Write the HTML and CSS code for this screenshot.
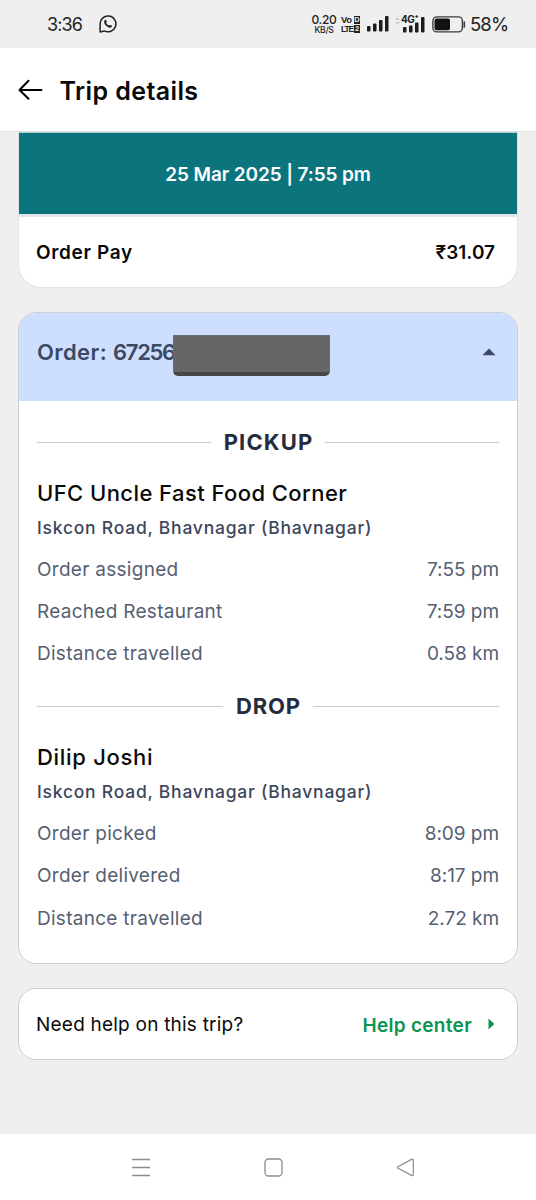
FILE: index.html
```html
<!DOCTYPE html>
<html lang="en">
<head>
<meta charset="utf-8">
<title>Trip details</title>
<link rel="stylesheet" href="styles.css">
</head>
<body>
<div class="screen">
  <div class="status">
    <span class="clock">3:36</span>
    <svg class="whatsapp" width="18" height="18" viewBox="0 0 18 18" fill="none" stroke="#222" stroke-width="1.5">
      <path d="M1.100 16.900V9A7.900 7.900 0 1 1 5.300 15.900Z" stroke-linejoin="round"/>
      <path d="M5.900 5.100c.6-.6 1.200-.3 1.400.3l.5 1.200c.1.4-.6 1-.6 1.200.4 1.200 1.500 2.300 2.900 2.800.3 0 .8-.8 1.200-.700l1.300.7c.5.3.3.8 0 1.300-.9 1-2.200.9-3.700.2C6.900 11 5.300 9 5.100 7.300c0-.9.2-1.600.8-2.200Z" fill="#222" stroke="none"/>
    </svg>
    <span class="speed"><b>0.20</b><i>KB/S</i></span>
    <span class="volte">
      <span class="volte-line"><span>Vo</span><em>D</em></span>
      <span class="volte-line"><span class="lte">LTE</span><em>2</em></span>
    </span>
    <svg class="signal" width="22" height="16" viewBox="0 0 22 16" fill="#1c1c1c">
      <rect x="0" y="10" width="3.500" height="5.500" rx="1"/><rect x="6" y="7.500" width="3.500" height="8" rx="1"/><rect x="12" y="4" width="3.500" height="11.500" rx="1"/><rect x="18" y="0" width="3.500" height="15.500" rx="1"/>
    </svg>
    <span class="mobile">
      <svg width="30" height="17" viewBox="0 0 30 17" fill="#1c1c1c">
        <path d="m0 4 2.500-2.800L5 4ZM0 6h5L2.500 8.600Z" fill="#c9c9c9"/>
        <rect x="8" y="11" width="3.500" height="5.500" rx="1"/><rect x="14" y="9.500" width="3.500" height="7" rx="1"/><rect x="20" y="6.500" width="3.500" height="10" rx="1"/><rect x="26" y="1" width="3.500" height="15.500" rx="1"/>
      </svg>
      <span class="net">4G⁺</span>
    </span>
    <svg class="battery" width="34" height="17" viewBox="0 0 34 17" fill="none">
      <rect x=".9" y=".9" width="29.500" height="15" rx="4" stroke="#3a3a3a" stroke-width="1.400"/>
      <rect x="2.500" y="2.500" width="15.500" height="11.800" rx="2" fill="#111"/>
      <path d="M32.300 6v5" stroke="#3a3a3a" stroke-width="1.600" stroke-linecap="round"/>
    </svg>
    <span class="percent">58%</span>
  </div>

  <header class="header">
    <svg width="25" height="22" viewBox="0 0 25 22" fill="none" stroke="#000" stroke-width="2" stroke-linecap="round" stroke-linejoin="round"><path d="M10.500 1.700 1.500 11l9 8.700M1.500 11H23.500"/></svg>
    <h1 class="title">Trip details</h1>
  </header>

  <main class="content">
    <section class="summary">
      <div class="date"><span>25 Mar 2025 | 7:55 pm</span></div>
      <div class="pay"><span class="pay-label">Order Pay</span><span class="amount">₹31.07</span></div>
    </section>

    <section class="card order">
      <div class="order-head">
        <span class="order-id">Order: <span class="digits">67256</span></span><span class="redacted"></span>
        <svg class="caret" width="14" height="8" viewBox="0 0 14 8"><path d="M7 .5 13.500 7.200H.5Z" fill="#3d4a63"/></svg>
      </div>
      <div class="order-body">
        <div class="stop">
          <div class="divider"><span class="pickup">PICKUP</span></div>
          <h2 class="name">UFC Uncle Fast Food Corner</h2>
          <p class="address">Iskcon Road, Bhavnagar (Bhavnagar)</p>
          <div class="row"><span>Order assigned</span><span class="value">7:55 pm</span></div>
          <div class="row"><span>Reached Restaurant</span><span class="value">7:59 pm</span></div>
          <div class="row"><span>Distance travelled</span><span class="value">0.58 km</span></div>
        </div>
        <div class="stop">
          <div class="divider"><span class="drop">DROP</span></div>
          <h2 class="name person">Dilip Joshi</h2>
          <p class="address">Iskcon Road, Bhavnagar (Bhavnagar)</p>
          <div class="row"><span>Order picked</span><span class="value">8:09 pm</span></div>
          <div class="row"><span>Order delivered</span><span class="value">8:17 pm</span></div>
          <div class="row"><span>Distance travelled</span><span class="value">2.72 km</span></div>
        </div>
      </div>
    </section>

    <section class="card help">
      <span class="question">Need help on this trip?</span>
      <span class="help-link">Help center</span>
      <svg width="7" height="12" viewBox="0 0 7 12"><path d="M.5.5 6.300 6 .5 11.500Z" fill="#0b9550"/></svg>
    </section>
  </main>

  <nav class="nav">
    <svg width="18" height="19" viewBox="0 0 18 19" stroke="#8c8c8c" stroke-width="1.300"><path d="M0 1.500h18M0 9.500h18M0 17.500h18"/></svg>
    <svg width="19" height="19" viewBox="0 0 19 19" fill="none" stroke="#8c8c8c" stroke-width="1.300"><rect x="1" y="1" width="17" height="17" rx="3.500"/></svg>
    <svg width="19" height="19" viewBox="0 0 19 19" fill="none" stroke="#8c8c8c" stroke-width="1.200" stroke-linejoin="round"><path d="M2 8.700 15.500 1.400q1.800-.8 1.800 1v14q0 1.800-1.800 1L2 10.200q-1.300-.7 0-1.500Z"/></svg>
  </nav>
</div>
</body>
</html>
```
FILE: styles.css
```css
* { box-sizing: border-box; }
body { margin: 0; background: #efefef; font-family: Inter, "Noto Sans", sans-serif; color: #0a0a0a; }
h1, h2, p { margin: 0; }
svg { display: block; flex: none; }
span { white-space: nowrap; }
.screen { width: 536px; height: 1200px; display: flex; flex-direction: column; overflow: hidden; }

.status { height: 48px; flex: none; display: flex; align-items: center; padding: 0 30px 0 47px; background: #efefef; color: #222; }
.clock { font-size: 18px; width: 52px; letter-spacing: -.9px; }
.whatsapp { margin-right: auto; }
.speed { display: flex; flex-direction: column; align-items: center; width: 24px; }
.speed b { font-size: 12px; line-height: 12px; font-weight: 500; letter-spacing: -.3px; }
.speed i { font-size: 8.500px; line-height: 8px; font-style: normal; font-weight: 500; letter-spacing: -.3px; }
.volte { display: flex; flex-direction: column; gap: 1px; width: 19px; margin-left: 5px; font: 700 9.500px/8px "Liberation Sans Narrow", "Liberation Sans", sans-serif; }
.volte-line { display: flex; justify-content: space-between; align-items: center; }
.volte-line span { letter-spacing: -.3px; }
.volte-line .lte { font-size: 8.500px; letter-spacing: -1.100px; }
.volte em { font-style: normal; font-size: 7.500px; line-height: 8px; width: 6px; text-align: center; background: #222; color: #efefef; }
.signal { margin-left: 7px; }
.mobile { position: relative; margin-left: 6px; }
.net { position: absolute; left: 6px; top: -1px; font-size: 10px; font-weight: 700; line-height: 9px; letter-spacing: -.5px; }
.battery { margin-left: 7px; }
.percent { font-size: 18.500px; width: 36px; margin-left: 4px; letter-spacing: -.9px; }

.header { height: 84px; flex: none; display: flex; align-items: center; gap: 17px; padding: 0 17px 0 17.500px; background: #fff; border-bottom: 1px solid #e4e4e4; }
.title { font-size: 25px; font-weight: 600; line-height: 32px; padding-top: 2px; letter-spacing: .4px; }

.content { flex: 1; padding: 0 18px; display: flex; flex-direction: column; }
.summary { height: 156px; flex: none; background: #fff; border: 1px solid #e2e3e5; border-top: 0; border-radius: 0 0 23px 23px; overflow: hidden; }
.date { height: 85px; padding-top: 2px; display: flex; align-items: center; justify-content: center; background: #0b747d; border-top: 1px solid #a9cdd1; border-bottom: 3px solid #e3e6ea; color: #fff; font-size: 19px; font-weight: 600; letter-spacing: -.12px; }
.pay { height: 70px; display: flex; align-items: center; justify-content: space-between; padding: 0 22px 0 17px; font-size: 19px; font-weight: 600; }
.pay-label { letter-spacing: .65px; }
.amount { letter-spacing: 0; }

.card { flex: none; background: #fff; border: 1px solid #cbced5; border-radius: 18px; overflow: hidden; }
.order { height: 652px; margin-top: 24px; }
.order-head { height: 88px; display: flex; align-items: flex-start; padding: 22px 21px 0 18px; background: #cedeff; }
.order-id { width: 136px; flex: none; font-size: 22px; font-weight: 600; line-height: 34px; letter-spacing: .4px; color: #3d4962; }
.digits { letter-spacing: -1.300px; }
.redacted { width: 157px; height: 41px; background: #666; border: 1px solid #666b78; border-bottom: 4px solid #46464a; border-radius: 1px 1px 5px 5px; }
.caret { margin: 13px 0 0 auto; }
.order-body { padding: 26px 18px 0; }
.stop { height: 264.200px; }
.divider { height: 30px; display: flex; align-items: center; gap: 13px; font-size: 22px; font-weight: 650; color: #252c3d; }
.divider::before, .divider::after { content: ""; flex: 1; height: 1px; background: #c9ccd4; }
.pickup { letter-spacing: 1.150px; margin-right: -1.150px; }
.drop { letter-spacing: .75px; margin-right: -.75px; }
.name { margin-top: 21px; font-size: 22px; font-weight: 550; line-height: 30px; letter-spacing: .43px; }
.person { letter-spacing: .7px; }
.address { margin: 7px 0 8px; font-size: 17.500px; font-weight: 550; line-height: 25px; letter-spacing: .77px; color: #3d475c; }
.row { height: 42.400px; display: flex; justify-content: space-between; align-items: center; font-size: 19px; letter-spacing: .28px; color: #565f72; }
.value { letter-spacing: -.05px; }

.help { height: 72px; margin-top: 24px; display: flex; align-items: center; padding: 0 22px 0 17px; font-size: 19px; }
.question { letter-spacing: .22px; }
.help-link { margin-left: auto; margin-right: 16px; padding-top: 3px; font-weight: 600; letter-spacing: .3px; color: #0b9550; }

.nav { height: 66px; flex: none; display: flex; justify-content: space-between; align-items: center; padding: 0 121px 0 132px; background: #fff; }
```
